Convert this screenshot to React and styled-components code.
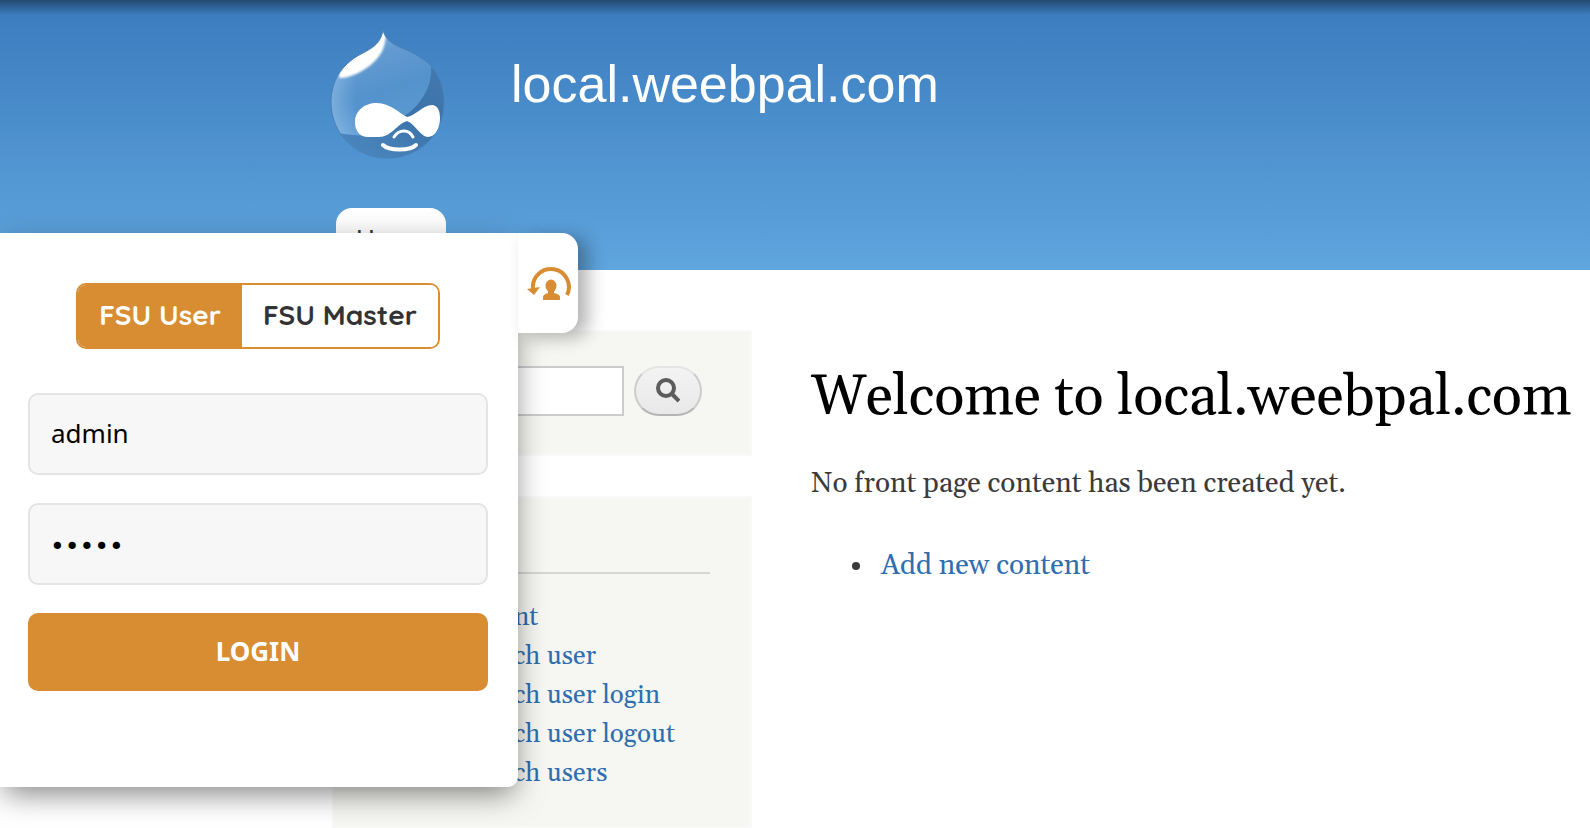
import { useState } from "react";
import styled, { createGlobalStyle, css } from "styled-components";

const serif = `Gelasio, Georgia, "Liberation Serif", serif`;
const sans = `"Noto Sans", sans-serif`;

const links = [
  "My content",
  "Fast Switch user",
  "Fast Switch user login",
  "Fast Switch user logout",
  "Fast Switch users",
];

const dropPath =
  "M53 0C55 9 62 14 72 18C84 23 95 29 102 37C110 46 114 60 114 72C114 105 89 128 57 128C26 128 1 104 1 72C1 62 4 52 8 45C14 36 20 30 31 24C43 18 51 13 53 0Z";

const Logo = () => (
  <svg width="116" height="130" viewBox="0 0 116 130" role="img" aria-label="Site logo">
    <defs>
      <linearGradient id="drop" x1="0.2" y1="0" x2="0.5" y2="1">
        <stop offset="0" stopColor="#6fa2d3" />
        <stop offset="0.5" stopColor="#5492cd" />
        <stop offset="1" stopColor="#62a0d8" />
      </linearGradient>
      <linearGradient id="shade" x1="1" y1="0" x2="0.3" y2="1">
        <stop offset="0" stopColor="#4379ad" />
        <stop offset="0.5" stopColor="#3b73aa" />
        <stop offset="1" stopColor="#4a86bd" />
      </linearGradient>
      <radialGradient id="rim" cx="0.58" cy="0.5" r="0.56">
        <stop offset="0.65" stopColor="#8fbde6" stopOpacity="0" />
        <stop offset="1" stopColor="#8fbde6" stopOpacity="0.6" />
      </radialGradient>
      <filter id="soft" x="-20%" y="-20%" width="140%" height="140%">
        <feGaussianBlur stdDeviation="1" />
      </filter>
      <clipPath id="dropClip">
        <path d={dropPath} />
      </clipPath>
    </defs>
    <g clipPath="url(#dropClip)">
      <rect width="116" height="130" fill="url(#drop)" />
      <rect width="116" height="130" fill="url(#rim)" />
      <path d="M101 36C103 58 88 78 74 86L56 104C40 106 22 106 8 103L10 130H116V56Z" fill="url(#shade)" />
      <path d="M56 0C56 12 54 22 45 31C34 42 19 48 10 48C7 45 11 36 18 28C30 18 48 18 50 0Z" fill="#fff" filter="url(#soft)" />
    </g>
    <path d={dropPath} fill="none" stroke="#4a80b5" strokeWidth="1" />
    <path d="M38 107C30 107 25 101 25 92C25 81 34 73 47 73C60 73 69 83 77 87C85 86 93 75 102 75C107 75 110 80 110 88C110 98 105 107 98 107C91 107 85 94 77 91C67 94 61 107 49 107Z" fill="#fff" />
    <path d="M64 107C69 99 79 99 83 107" fill="none" stroke="#fff" strokeWidth="3" strokeLinecap="round" />
    <path d="M53 115C59 121 80 121 86 115" fill="none" stroke="#fff" strokeWidth="4" strokeLinecap="round" />
  </svg>
);

const SwitchIcon = () => (
  <svg width="46" height="34" viewBox="0 0 46 34" aria-hidden="true">
    <path d="M8 23A18 18 0 1 1 42 29" fill="none" stroke="#d98d33" strokeWidth="4" />
    <path d="M2 23L15 21L9 29Z" fill="#d98d33" />
    <ellipse cx="26" cy="20" rx="5.5" ry="6.5" fill="#d98d33" />
    <path d="M23 23H29V27C33 28 35 29 35 31V34H18V31C18 29 20 28 23 27Z" fill="#d98d33" />
  </svg>
);

const SearchIcon = () => (
  <svg width="24" height="26" viewBox="0 0 24 26" aria-hidden="true">
    <circle cx="10" cy="10" r="8" fill="none" stroke="#5c5c5c" strokeWidth="4" />
    <path d="M16 16L23 23" stroke="#5c5c5c" strokeWidth="4" />
  </svg>
);

const LoginPanel = () => {
  const [mode, setMode] = useState("user");
  const [name, setName] = useState("admin");
  const [password, setPassword] = useState("admin");

  return (
    <Panel>
      <PanelBody onSubmit={(e) => e.preventDefault()}>
        <Toggle>
          <ToggleButton type="button" $active={mode === "user"} onClick={() => setMode("user")}>
            FSU User
          </ToggleButton>
          <ToggleButton type="button" $active={mode === "master"} onClick={() => setMode("master")}>
            FSU Master
          </ToggleButton>
        </Toggle>
        <Field aria-label="Username" value={name} onChange={(e) => setName(e.target.value)} />
        <PasswordField
          type="password"
          aria-label="Password"
          value={password}
          onChange={(e) => setPassword(e.target.value)}
        />
        <LoginButton type="submit">LOGIN</LoginButton>
      </PanelBody>
      <PanelHandle type="button" aria-label="Switch user">
        <SwitchIcon />
      </PanelHandle>
    </Panel>
  );
};

const App = () => (
  <>
    <GlobalStyle />
    <Header>
      <Branding>
        <Logo />
        <SiteName href="#">local.weebpal.com</SiteName>
      </Branding>
      <nav>
        <NavTab href="#">Home</NavTab>
      </nav>
    </Header>
    <Columns>
      <Sidebar>
        <SearchBlock role="search">
          <SearchInput type="search" aria-label="Search" />
          <SearchButton type="button" aria-label="Search">
            <SearchIcon />
          </SearchButton>
        </SearchBlock>
        <MenuBlock>
          <MenuTitle>Tools</MenuTitle>
          <MenuList>
            {links.map((link) => (
              <li key={link}>
                <Link href="#">{link}</Link>
              </li>
            ))}
          </MenuList>
        </MenuBlock>
      </Sidebar>
      <Main>
        <Title>Welcome to local.weebpal.com</Title>
        <Text>No front page content has been created yet.</Text>
        <Actions>
          <ActionItem>
            <Link href="#">Add new content</Link>
          </ActionItem>
        </Actions>
      </Main>
    </Columns>
    <LoginPanel />
  </>
);

export default App;

const GlobalStyle = createGlobalStyle`
  * {
    box-sizing: border-box;
  }

  body {
    margin: 0;
    background: #fff;
    color: #3b3b3b;
    font-family: ${serif};
  }
`;

const Header = styled.header`
  display: flex;
  flex-direction: column;
  justify-content: space-between;
  height: 270px;
  padding: 30px 0 0 330px;
  background:
    linear-gradient(rgba(0, 0, 0, 0.4), rgba(0, 0, 0, 0) 15px),
    linear-gradient(#3a7bbd, #5fa5de);
`;

const Branding = styled.div`
  display: flex;
  align-items: flex-start;
  gap: 65px;
`;

const SiteName = styled.a`
  padding-top: 24px;
  color: #fff;
  font-family: "Liberation Sans", sans-serif;
  font-size: 52px;
  line-height: 60px;
  text-decoration: none;
`;

const NavTab = styled.a`
  display: block;
  width: 110px;
  height: 62px;
  margin-left: 6px;
  padding: 16px 20px;
  border-radius: 16px 16px 0 0;
  background: linear-gradient(#fff, #f4f4f4);
  color: #333;
  font-family: "Liberation Sans", sans-serif;
  font-size: 26px;
  line-height: 30px;
  text-decoration: none;
`;

const Columns = styled.div`
  display: flex;
  gap: 59px;
  padding: 60px 0 0 332px;
`;

const Sidebar = styled.aside`
  flex: none;
  display: flex;
  flex-direction: column;
  gap: 40px;
  width: 420px;
`;

const block = css`
  border: 2px solid #f9f9f9;
  background: #f6f6f2;
`;

const SearchBlock = styled.div`
  ${block}
  display: flex;
  gap: 10px;
  height: 126px;
  padding: 34px 48px 0 40px;
`;

const SearchInput = styled.input`
  flex: 1;
  min-width: 0;
  height: 50px;
  border: 2px solid #ccc;
  background: #fff;
`;

const SearchButton = styled.button`
  display: flex;
  align-items: center;
  justify-content: center;
  width: 68px;
  height: 50px;
  padding: 0;
  border: 2px solid #ccc;
  border-top-color: #e4e4e4;
  border-bottom-color: #b4b4b4;
  border-radius: 25px;
  background: linear-gradient(#f3f3f3, #e8e8e8);
`;

const MenuBlock = styled.div`
  ${block}
  height: 332px;
  padding: 28px 40px;
`;

const MenuTitle = styled.h2`
  margin: 0;
  height: 48px;
  border-bottom: 2px solid #d6d6d6;
  font-size: 28px;
  font-weight: normal;
  line-height: 40px;
`;

const MenuList = styled.ul`
  margin: 0;
  padding: 24px 0 0 34px;
  list-style: none;
  font-size: 26px;
  line-height: 39px;
  white-space: nowrap;
`;

const Link = styled.a`
  color: #2f6eb0;
  text-decoration: none;
`;

const Main = styled.main`
  flex: 1;
  min-width: 0;
  padding-top: 33px;
`;

const Title = styled.h1`
  margin: 0;
  color: #000;
  font-size: 56px;
  font-weight: normal;
  line-height: 70px;
  white-space: nowrap;
`;

const Text = styled.p`
  margin: 30px 0 0;
  font-size: 28px;
  line-height: 42px;
`;

const Actions = styled.ul`
  margin: 40px 0 0;
  padding-left: 41px;
  list-style: none;
  font-size: 28px;
  line-height: 42px;
`;

const ActionItem = styled.li`
  display: flex;
  align-items: center;
  gap: 21px;

  &::before {
    content: "";
    width: 8px;
    height: 8px;
    border-radius: 50%;
    background: #3b3b3b;
  }
`;

const Panel = styled.section`
  position: absolute;
  top: 233px;
  left: 0;
  display: flex;
  align-items: flex-start;
`;

const PanelBody = styled.form`
  display: flex;
  flex-direction: column;
  gap: 28px;
  width: 518px;
  height: 554px;
  padding: 50px 30px 0 28px;
  border-radius: 0 0 10px 0;
  background: #fff;
  box-shadow: 0 10px 30px -4px rgba(0, 0, 0, 0.5);
`;

const Toggle = styled.div`
  display: flex;
  align-self: center;
  margin-bottom: 16px;
  border: 2px solid #d98d33;
  border-radius: 10px;
  overflow: hidden;
`;

const ToggleButton = styled.button`
  height: 62px;
  padding: 0 21px 4px;
  border: 0;
  background: ${({ $active }) => ($active ? "#d98d33" : "#fff")};
  color: ${({ $active }) => ($active ? "#fff" : "#333")};
  font-family: Quicksand, Lato, sans-serif;
  font-size: 28px;
  font-weight: 700;
`;

const Field = styled.input`
  width: 100%;
  height: 82px;
  padding: 0 21px 2px;
  border: 2px solid #e4e4e4;
  border-radius: 10px;
  background: #f7f7f7;
  color: #000;
  font-family: ${sans};
  font-size: 26px;
`;

const PasswordField = styled(Field)`
  padding: 4px 20px 0;
  font-family: "DejaVu Sans", sans-serif;
  font-size: 25px;
`;

const LoginButton = styled.button`
  height: 78px;
  padding: 0 0 2px;
  border: 0;
  border-radius: 10px;
  background: #d98d33;
  color: #fff;
  font-family: ${sans};
  font-size: 26px;
  font-weight: 700;
`;

const PanelHandle = styled.button`
  position: relative;
  display: flex;
  align-items: center;
  justify-content: center;
  width: 60px;
  height: 100px;
  padding: 0;
  border: 0;
  border-radius: 0 16px 16px 0;
  background: #fff;
  box-shadow: 10px 4px 18px rgba(0, 0, 0, 0.3);
`;
